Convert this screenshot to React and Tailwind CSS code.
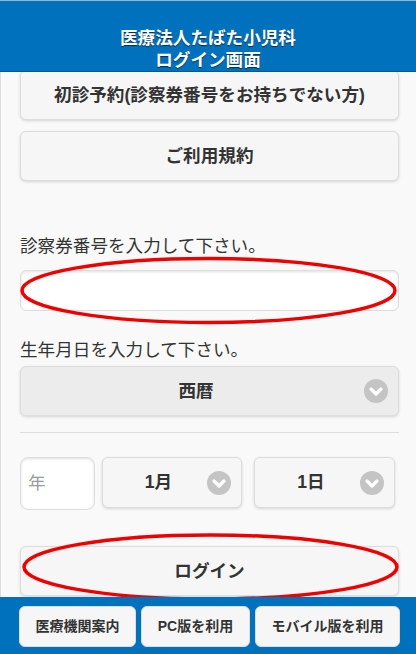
import React from "react";

const font = { fontFamily: '"Liberation Sans", "Noto Sans CJK JP", sans-serif' };

function Chevron() {
  return (
    <svg width="24" height="24" viewBox="0 0 24 24" className="shrink-0">
      <circle cx="12" cy="12" r="12" fill="#c4c4c4" />
      <path d="M7 10 L12 15 L17 10" fill="none" stroke="#fff" strokeWidth="3.2" strokeLinecap="round" strokeLinejoin="round" />
    </svg>
  );
}

function Btn({ children, className = "" }) {
  return (
    <div className={`h-[50px] flex items-center justify-center rounded-[6px] border border-[#dddddd] bg-[#f6f6f6] shadow-[0_1px_3px_rgba(0,0,0,0.15)] text-[17.6px] font-bold text-[#333] ${className}`}>
      {children}
    </div>
  );
}

function Select({ label, dark, className = "" }) {
  return (
    <div className={`relative flex items-center justify-center rounded-[6px] border border-[#dddddd] shadow-[0_1px_3px_rgba(0,0,0,0.15)] text-[17.6px] font-bold text-[#333] ${dark ? "bg-[#ececec]" : "bg-[#f6f6f6]"} ${className}`}>
      <span className="pr-[27px]">{label}</span>
      <div className="absolute right-[10px] top-1/2 -translate-y-1/2">
        <Chevron />
      </div>
    </div>
  );
}

export default function App() {
  return (
    <div className="w-[416px] h-[654px] flex flex-col bg-[#f9f9f9] overflow-hidden" style={font}>
      {/* ヘッダー */}
      <div className="h-[72px] shrink-0 bg-[#0071bc] border-t border-[#9fb3c4] border-b border-b-[#0b5690] pt-[26px] text-center text-white font-bold text-[17.6px] leading-[22px] [text-shadow:0_1px_1px_rgba(0,0,0,0.6)] z-10">
        <div>医療法人たばた小児科</div>
        <div>ログイン画面</div>
      </div>

      {/* 本文 */}
      <div className="relative flex-1 overflow-hidden border-l border-[#dcdcdc]">
        <div className="-mt-[2px] pl-[19px] pr-[17px] flex flex-col">
          <Btn>初診予約(診察券番号をお持ちでない方)</Btn>
          <Btn className="mt-[11px]">ご利用規約</Btn>

          <div className="mt-[53px] text-[17.6px] leading-[24px] text-[#333]">診察券番号を入力して下さい。</div>
          <div className="mt-[12px] h-[41px] rounded-[6px] border border-[#dddddd] bg-white shadow-[inset_0_1px_3px_rgba(0,0,0,0.12)]" />

          <div className="mt-[27px] text-[17.6px] leading-[24px] text-[#333]">生年月日を入力して下さい。</div>
          <Select label="西暦" dark className="mt-[4px] h-[50px]" />

          <div className="mt-[16px] h-px bg-[#dddddd]" />

          <div className="mt-[24px] flex items-start">
            <div className="w-[75px] h-[53px] rounded-[8px] border border-[#dddddd] bg-white shadow-[inset_0_1px_3px_rgba(0,0,0,0.12)] flex items-center pl-[7px] text-[17.6px] text-[#9a9a9a]">
              年
            </div>
            <Select label="1月" className="ml-[7px] w-[140px] h-[51px]" />
            <Select label="1日" className="ml-[12px] w-[141px] h-[51px]" />
          </div>

          <Btn className="mt-[36px]">ログイン</Btn>
        </div>

        {/* 赤い囲み */}
        <svg className="absolute left-0 top-0 pointer-events-none" width="416" height="540" viewBox="0 72 416 540">
          <ellipse cx="207.5" cy="290.5" rx="186.5" ry="32" fill="none" stroke="#ee0000" strokeWidth="3.5" />
          <ellipse cx="209.5" cy="567" rx="186.5" ry="32" fill="none" stroke="#ee0000" strokeWidth="3.5" />
        </svg>
      </div>

      {/* フッター */}
      <div className="h-[57px] shrink-0 bg-[#0071bc] pt-[9px] pl-[19px] flex gap-[5px] z-10">
        {[
          ["医療機関案内", "w-[117px]"],
          ["PC版を利用", "w-[109px]"],
          ["モバイル版を利用", "w-[145px]"],
        ].map(([t, w]) => (
          <div key={t} className={`${w} h-[41px] rounded-[6px] border border-[#dddddd] bg-[#f6f6f6] flex items-center justify-center text-[14px] font-bold text-[#333]`}>
            {t}
          </div>
        ))}
      </div>
    </div>
  );
}
